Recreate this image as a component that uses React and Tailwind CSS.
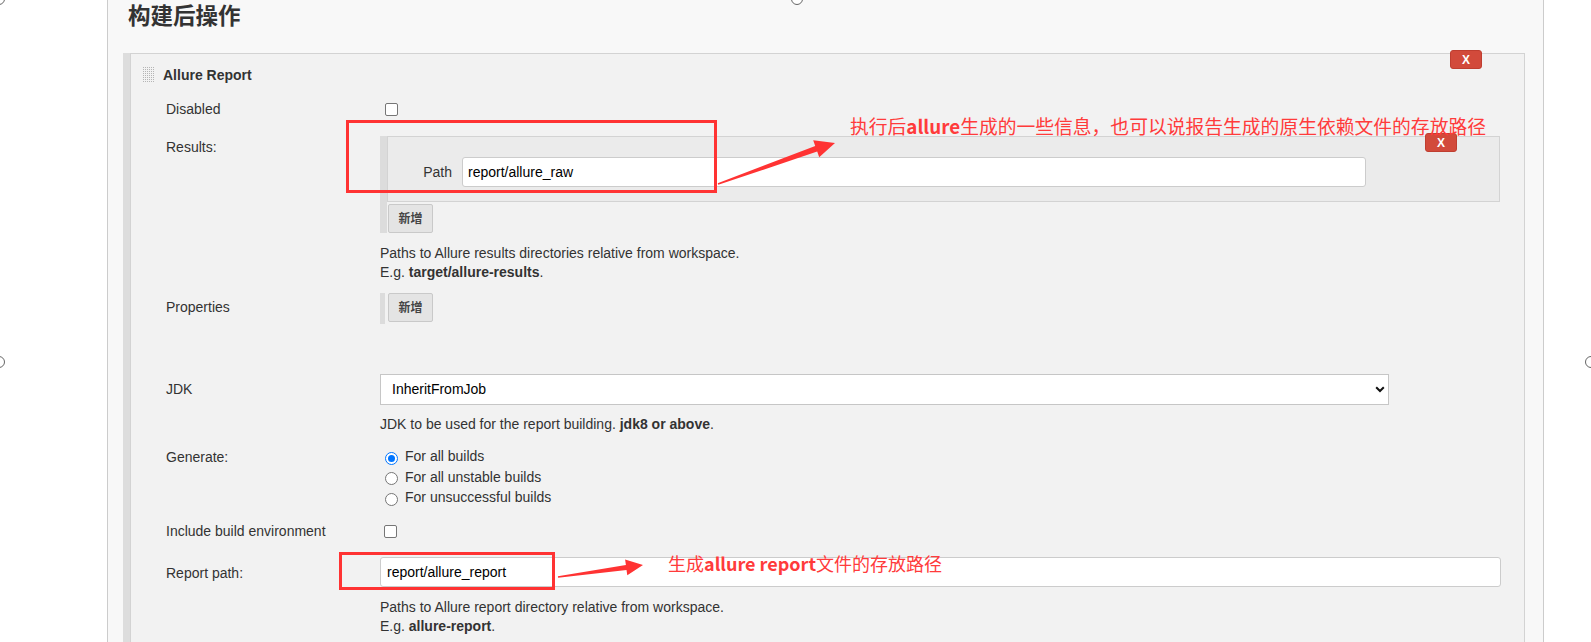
import React from "react";

const Check = ({ className = "" }) => (
  <div className={"w-[13px] h-[13px] border border-[#767676] rounded-[2px] bg-white " + className} />
);

const Radio = ({ checked }) =>
  checked ? (
    <div className="w-[13px] h-[13px] rounded-full border-[1.5px] border-[#0075ff] bg-white flex items-center justify-center">
      <div className="w-[7px] h-[7px] rounded-full bg-[#0075ff]" />
    </div>
  ) : (
    <div className="w-[13px] h-[13px] rounded-full border border-[#767676] bg-white" />
  );

const AddButton = ({ className = "" }) => (
  <div
    className={
      "h-[29px] w-[45px] border border-[#c9c9c9] rounded-[2px] bg-[#e4e4e4] text-[12px] font-bold text-[#444] flex items-center justify-center " +
      className
    }
  >
    新增
  </div>
);

const XButton = ({ className = "" }) => (
  <div
    className={
      "absolute w-[32px] h-[19px] rounded-[3px] bg-[#d24a3b] border border-[#bf3e30] text-white text-[12px] font-bold flex items-center justify-center leading-none " +
      className
    }
  >
    X
  </div>
);

const Handle = () => (
  <svg width="12" height="16" viewBox="0 0 12 16">
    {[0, 1, 2, 3, 4, 5, 6, 7].map((r) =>
      [0, 1, 2, 3, 4, 5].map((c) => (
        <rect key={r + "-" + c} x={c * 2} y={r * 2} width="1" height="1" fill="#b5b5b5" />
      ))
    )}
  </svg>
);

const Label = ({ children, className = "" }) => (
  <div className={"w-[214px] shrink-0 text-[14px] text-[#333] " + className}>{children}</div>
);

export default function App() {
  return (
    <div className="relative w-[1591px] h-[642px] overflow-hidden bg-white font-['Liberation_Sans','Noto_Sans_CJK_SC',sans-serif] text-[#333]">
      <div className="ml-[107px] w-[1437px] h-[700px] border-x border-[#cccccc] bg-[#f8f8f8]">
        <h2 className="h-[53px] pl-[20px] pt-[2px] text-[22.5px] font-bold leading-[30px] text-[#333] font-['Liberation_Sans','Noto_Sans_CJK_SC',sans-serif]">
          构建后操作
        </h2>
        <div className="ml-[15px] mr-[18px] border-l-[7px] border-[#dddddd]">
          <div className="relative border border-[#d3d3d3] bg-[#f2f2f2] h-[640px]">
            <XButton className="right-[42px] top-[-4px]" />
            <div className="flex items-center h-[42px] pl-[12px]">
              <Handle />
              <span className="ml-[8px] text-[14px] font-bold text-[#333]">Allure Report</span>
            </div>
            <div className="pl-[35px]">
              {/* Disabled */}
              <div className="flex items-center h-[26px]">
                <Label>Disabled</Label>
                <Check className="ml-[5px]" />
              </div>
              {/* Results */}
              <div className="flex items-start h-[111px]">
                <Label className="mt-[17px] leading-[16px]">Results:</Label>
                <div className="mt-[14px] border-l-[7px] border-[#dcdcdc]">
                  <div className="relative w-[1113px] h-[66px] border border-[#d3d3d3] bg-[#ebebeb] pt-[20px] flex">
                    <XButton className="right-[42px] top-[-4px]" />
                    <div className="w-[64px] text-right text-[14px] leading-[30px] text-[#333]">Path</div>
                    <div className="ml-[10px] w-[904px] h-[30px] border border-[#cccccc] rounded-[3px] bg-white pl-[5px] text-[14px] leading-[28px] text-black">
                      report/allure_raw
                    </div>
                  </div>
                  <AddButton className="ml-[1px] mt-[2px]" />
                </div>
              </div>
              <div className="mt-[11px] pl-[214px] text-[14px] leading-[19px] text-[#333]">
                <div>Paths to Allure results directories relative from workspace.</div>
                <div>
                  E.g. <b>target/allure-results</b>.
                </div>
              </div>
              {/* Properties */}
              <div className="mt-[11px] flex items-start">
                <Label className="mt-[6px] leading-[16px]">Properties</Label>
                <div className="border-l-[5px] border-[#dcdcdc] pl-[3px] pb-[2px]">
                  <AddButton />
                </div>
              </div>
              {/* JDK */}
              <div className="mt-[50px] flex items-start">
                <Label className="mt-[7px] leading-[16px]">JDK</Label>
                <div className="w-[1009px] h-[31px] border border-[#c6c6c6] bg-white flex items-center justify-between pl-[11px] pr-[3px] text-[14px] text-black">
                  <span>InheritFromJob</span>
                  <svg width="10" height="7" viewBox="0 0 10 7">
                    <path d="M1.2 1.3 L5 5 L8.8 1.3" fill="none" stroke="#111" strokeWidth="2" />
                  </svg>
                </div>
              </div>
              <div className="mt-[10px] pl-[214px] text-[14px] leading-[19px] text-[#333]">
                JDK to be used for the report building. <b>jdk8 or above</b>.
              </div>
              {/* Generate */}
              <div className="mt-[12.5px] flex items-start">
                <Label className="leading-[20.5px]">Generate:</Label>
                <div className="flex flex-col text-[14px] text-[#333]">
                  {[
                    ["For all builds", true],
                    ["For all unstable builds", false],
                    ["For unsuccessful builds", false],
                  ].map(([t, c]) => (
                    <div key={t} className="flex items-center h-[20.5px]">
                      <div className="ml-[5px] mt-[3px]">
                        <Radio checked={c} />
                      </div>
                      <span className="ml-[7px]">{t}</span>
                    </div>
                  ))}
                </div>
              </div>
              {/* Include build environment */}
              <div className="mt-[10.5px] flex items-center h-[26px]">
                <Label>Include build environment</Label>
                <Check className="ml-[4px]" />
              </div>
              {/* Report path */}
              <div className="mt-[12px] flex items-start">
                <Label className="mt-[8px] leading-[16px]">Report path:</Label>
                <div className="w-[1121px] h-[30px] border border-[#cccccc] rounded-[3px] bg-white pl-[6px] text-[14px] leading-[28px] text-black">
                  report/allure_report
                </div>
              </div>
              <div className="mt-[11.5px] pl-[214px] text-[14px] leading-[19px] text-[#333]">
                <div>Paths to Allure report directory relative from workspace.</div>
                <div>
                  E.g. <b>allure-report</b>.
                </div>
              </div>
            </div>
          </div>
        </div>
      </div>

      {/* Annotations */}
      <div className="absolute left-[346px] top-[120px] w-[371px] h-[73px] border-[3px] border-[#ff3333]" />
      <div className="absolute left-[339px] top-[552px] w-[216px] h-[38px] border-[3px] border-[#ff3333]" />
      <svg className="absolute left-0 top-0 pointer-events-none" width="1591" height="642">
        <polygon
          points="718.3,184.8 817.2,151.6 819.2,157.3 835,143 813.2,140.3 815.2,145.9 717.7,183.2"
          fill="#ff3333"
        />
        <polygon
          points="558.1,577.7 626.5,569.9 627.3,575.3 643,565 625.1,559.5 625.9,564.9 557.9,576.3"
          fill="#ff3333"
        />
      </svg>
      <div className="absolute left-[850px] top-[116px] text-[18.8px] leading-[20px] text-[#ff3b3b] whitespace-nowrap font-['Noto_Sans_CJK_SC',sans-serif]">
        执行后<span className="font-semibold">allure</span>生成的一些信息，也可以说报告生成的原生依赖文件的存放路径
      </div>
      <div className="absolute left-[668px] top-[553px] text-[18px] leading-[20px] text-[#ff3b3b] whitespace-nowrap font-['Noto_Sans_CJK_SC',sans-serif]">
        生成<span className="font-semibold">allure report</span>文件的存放路径
      </div>

      {/* selection handles */}
      <div className="absolute left-[-7px] top-[-7px] w-[12px] h-[12px] rounded-full border border-[#666] bg-white" />
      <div className="absolute left-[791px] top-[-7px] w-[12px] h-[12px] rounded-full border border-[#666] bg-white" />
      <div className="absolute left-[-7px] top-[356px] w-[12px] h-[12px] rounded-full border border-[#666] bg-white" />
      <div className="absolute left-[1585px] top-[356px] w-[12px] h-[12px] rounded-full border border-[#666] bg-white" />
    </div>
  );
}
